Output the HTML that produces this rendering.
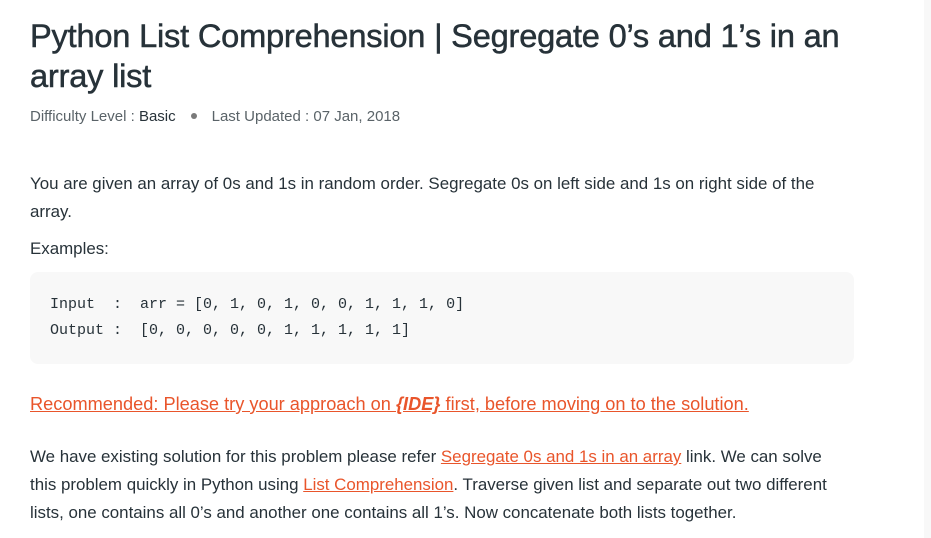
<!DOCTYPE html>
<html><head><meta charset="utf-8"><style>
html,body{margin:0;padding:0;background:#fff;width:931px;height:538px;overflow:hidden;position:relative}
body{font-family:"Liberation Sans",sans-serif;color:#273239}
.strip{position:absolute;left:924px;top:0;width:7px;height:538px;background:#f8f8f8}
h1{position:absolute;left:30px;top:16px;margin:0;font-size:32.6px;line-height:40px;font-weight:normal;color:#273239;width:850px;letter-spacing:-0.2px;-webkit-text-stroke:0.5px #273239}
.meta{position:absolute;left:30px;top:108px;font-size:15px;color:#5a6368}
.meta b{font-weight:normal;color:#273239}
.dot{display:inline-block;width:6px;height:6px;border-radius:50%;background:#7a7a7a;margin:0 15px 2px 15px;vertical-align:middle}
p{position:absolute;left:30px;margin:0;font-size:16.9px;line-height:28px;color:#273239;width:830px}
a{color:#e9552b;text-decoration:underline}
.code{position:absolute;left:30px;top:272px;width:824px;height:92px;background:#f8f8f8;border-radius:8px}
pre{position:absolute;left:50px;top:292px;margin:0;font-family:"Liberation Mono",monospace;font-size:15px;line-height:26px;color:#273239}
</style></head><body>
<div class="strip"></div>
<h1>Python List Comprehension | Segregate 0’s and 1’s in an array list</h1>
<div class="meta">Difficulty Level : <b>Basic</b><span class="dot"></span>Last Updated : 07 Jan, 2018</div>
<p style="top:170px">You are given an array of 0s and 1s in random order. Segregate 0s on left side and 1s on right side of the<br>array.</p>
<p style="top:235px">Examples:</p>
<div class="code"></div>
<pre>Input  :  arr = [0, 1, 0, 1, 0, 0, 1, 1, 1, 0]
Output :  [0, 0, 0, 0, 0, 1, 1, 1, 1, 1]</pre>
<p style="top:390px;font-size:18.2px;width:900px"><a>Recommended: Please try your approach on <b><i>{IDE}</i></b> first, before moving on to the solution.</a></p>
<p style="top:443px">We have existing solution for this problem please refer <a>Segregate 0s and 1s in an array</a> link. We can solve<br>this problem quickly in Python using <a>List Comprehension</a>. Traverse given list and separate out two different<br>lists, one contains all 0’s and another one contains all 1’s. Now concatenate both lists together.</p>
</body></html>
